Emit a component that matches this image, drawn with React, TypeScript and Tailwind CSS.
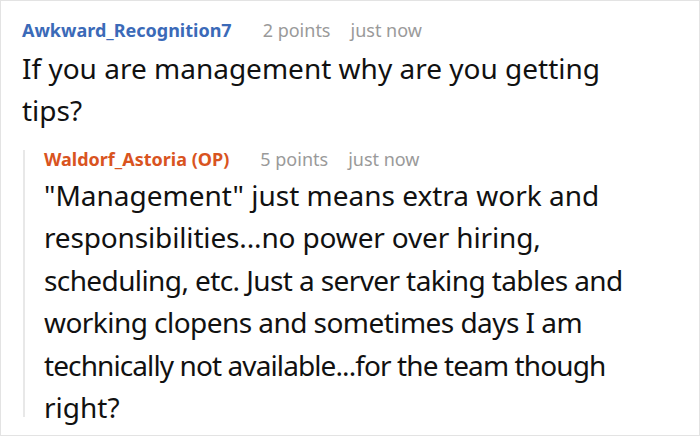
export default function App() {
  return (
    <div
      className="w-[700px] h-[436px] border border-[#e3e3e3] bg-white overflow-hidden pl-[21px] pt-[17px]"
      style={{ fontFamily: '"Noto Sans", "Open Sans", sans-serif' }}
    >
      <div className="flex items-center gap-[31px] h-[24px] text-[18px]">
        <span className="font-bold text-[#3b6ab8]">Awkward_Recognition7</span>
        <span className="flex gap-[20px] text-[#9a9a9a]">
          <span>2 points</span>
          <span>just now</span>
        </span>
      </div>
      <p className="mt-[5px] text-[28px] leading-[42px] text-[#111] w-[640px]">
        If you are management why are you getting tips?
      </p>
      <div className="flex mt-[16px] ml-[1px]">
        <div className="w-[2px] bg-[#e8e8e8] mt-[3px] mb-[11px]" />
        <div className="pl-[19px]">
          <div className="flex items-center gap-[31px] h-[24px] text-[18px]">
            <span className="font-bold text-[#d9541f]">Waldorf_Astoria (OP)</span>
            <span className="flex gap-[20px] text-[#9a9a9a]">
              <span>5 points</span>
              <span>just now</span>
            </span>
          </div>
          <p className="mt-[3px] text-[28px] leading-[42.4px] text-[#111] w-[640px] whitespace-nowrap">
            <span className="block">"Management" just means extra work and</span>
            <span className="block tracking-[-0.15px]">responsibilities...no power over hiring,</span>
            <span className="block tracking-[-0.6px]">scheduling, etc. Just a server taking tables and</span>
            <span className="block tracking-[-0.55px]">working clopens and sometimes days I am</span>
            <span className="block tracking-[-0.9px]">technically not available...for the team though</span>
            <span className="block">right?</span>
          </p>
        </div>
      </div>
    </div>
  );
}
